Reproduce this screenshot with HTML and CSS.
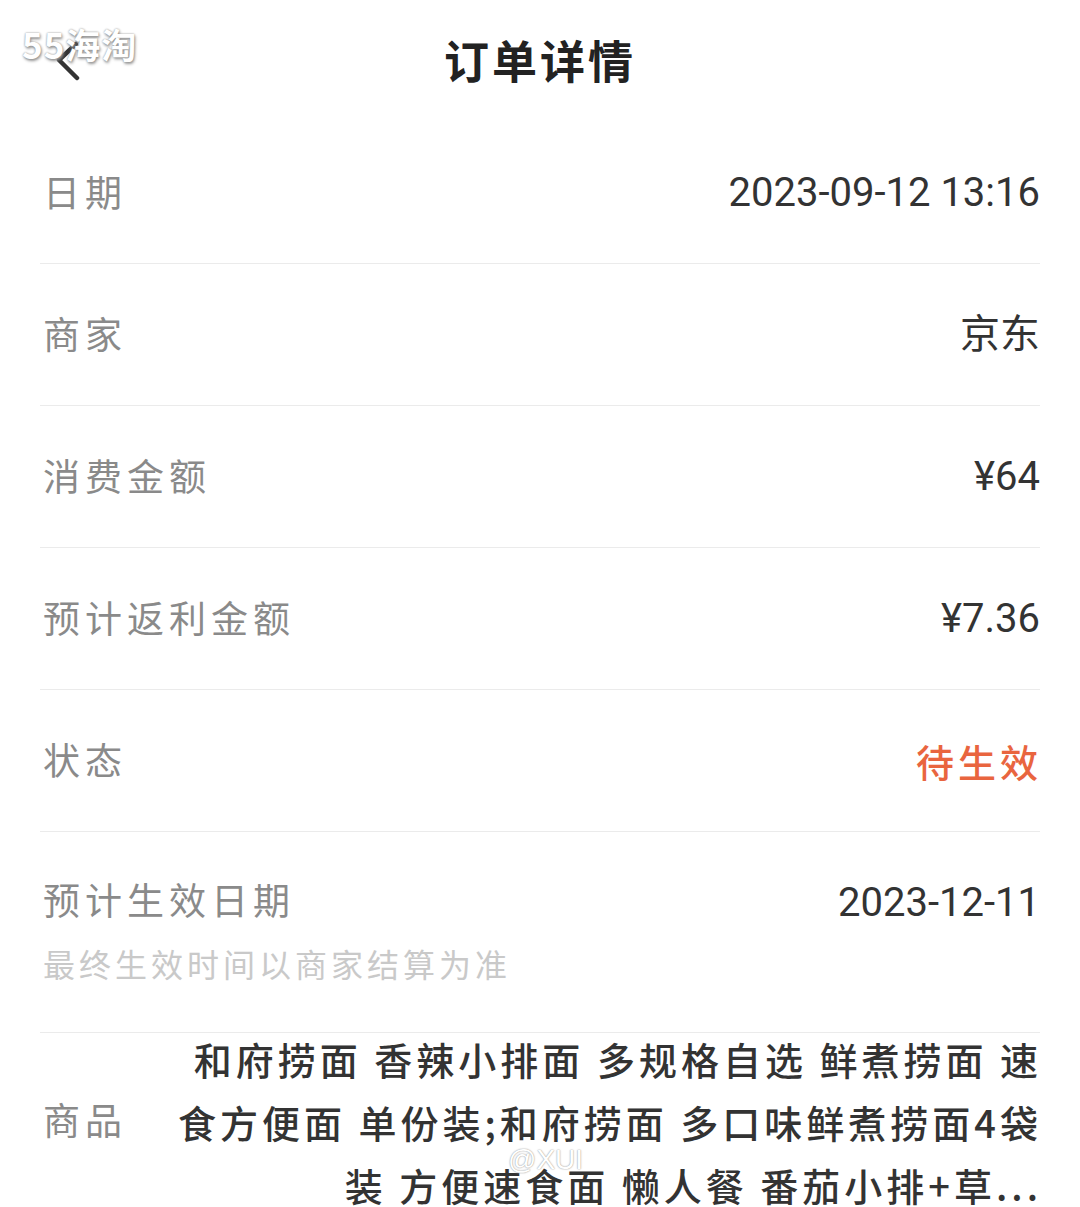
FILE: index.html
```html
<!DOCTYPE html>
<html lang="zh-CN">
<head>
    <meta charset="UTF-8">
    <meta name="viewport" content="width=device-width, initial-scale=1.0">
    <title>订单详情</title>
    <link rel="stylesheet" href="styles.css">
</head>
<body>
    <div class="watermark-logo">55海淘</div>

    <div class="header">
        <span class="back">
            <svg width="40" height="50" viewBox="0 0 40 50">
                <path d="M36 8 L19 24 L37 42" fill="none" stroke="#333" stroke-width="4.5" stroke-linecap="round" stroke-linejoin="round"/>
            </svg>
        </span>
        <h1>订单详情</h1>
    </div>

    <div class="container">
        <div class="row">
            <span class="label">日期</span>
            <span class="value">2023-09-12 13:16</span>
        </div>
        <div class="row">
            <span class="label">商家</span>
            <span class="value">京东</span>
        </div>
        <div class="row">
            <span class="label">消费金额</span>
            <span class="value">¥64</span>
        </div>
        <div class="row">
            <span class="label">预计返利金额</span>
            <span class="value">¥7.36</span>
        </div>
        <div class="row">
            <span class="label">状态</span>
            <span class="value status">待生效</span>
        </div>
        <div class="row row-tall">
            <div class="label-group">
                <span class="label">预计生效日期</span>
                <span class="hint">最终生效时间以商家结算为准</span>
            </div>
            <span class="value">2023-12-11</span>
        </div>
        <div class="row row-goods">
            <span class="label">商品</span>
            <span class="goods">和府捞面 香辣小排面 多规格自选 鲜煮捞面 速食方便面 单份装;和府捞面 多口味鲜煮捞面4袋装 方便速食面 懒人餐 番茄小排+草...</span>
        </div>
    </div>

    <div class="watermark-user">@XUI</div>
</body>
</html>
```

FILE: styles.css
```css
body {
    font-family: Roboto, "Noto Sans CJK SC", sans-serif;
    background-color: #fff;
    color: #333;
    margin: 0;
    padding: 0;
    position: relative;
}

.header {
    height: 122px;
    display: flex;
    align-items: center;
    justify-content: center;
    position: relative;
}

.header h1 {
    margin: 0 0 4px 0;
    font-family: "Noto Sans CJK SC", sans-serif;
    font-size: 45px;
    font-weight: 700;
    letter-spacing: 3px;
    color: #222;
}

.back {
    position: absolute;
    left: 40px;
    top: 36px;
}

.container {
    padding: 0 40px;
}

.row {
    display: flex;
    justify-content: space-between;
    align-items: center;
    padding: 50px 0 49px;
    border-bottom: 1px solid #ebebeb;
    line-height: 42px;
}

.label {
    margin-left: 3px;
    margin-top: -4px;
    font-family: "Noto Sans CJK SC", sans-serif;
    font-size: 37px;
    letter-spacing: 5px;
    color: #8a8a8a;
}

.value {
    font-size: 40px;
    color: #333;
}

.status {
    font-family: "Noto Sans CJK SC", sans-serif;
    font-size: 38px;
    font-weight: 500;
    letter-spacing: 4px;
    margin-right: -2px;
    color: #e9653f;
}

.row-tall {
    align-items: flex-start;
    padding: 50px 0 49px;
}

.label-group {
    display: flex;
    flex-direction: column;
}

.hint {
    margin-top: 23px;
    margin-left: 3px;
    line-height: 40px;
    font-family: "Noto Sans CJK SC", sans-serif;
    font-size: 32px;
    letter-spacing: 4px;
    color: #c9c9c9;
}

.row-goods {
    padding: 0;
    margin-top: -6px;
    border-bottom: none;
    line-height: 63px;
}

.goods {
    width: 872px;
    text-align: right;
    font-family: "Noto Sans CJK SC", sans-serif;
    font-size: 38px;
    font-weight: 500;
    letter-spacing: 4px;
    margin-right: -2px;
    color: #333;
}

.watermark-logo {
    position: absolute;
    left: 22px;
    top: 18px;
    z-index: 10;
    font-family: "Noto Sans CJK SC", sans-serif;
    font-size: 35px;
    font-weight: 700;
    letter-spacing: 1px;
    color: #fff;
    text-shadow: 0 0 2px #888, 1px 2px 3px #999;
}

.watermark-user {
    position: absolute;
    left: 508px;
    top: 1144px;
    font-family: "Liberation Sans", sans-serif;
    font-size: 28px;
    color: #fff;
    text-shadow: 0 0 1px #999, 0 0 2px #bbb;
}
```
